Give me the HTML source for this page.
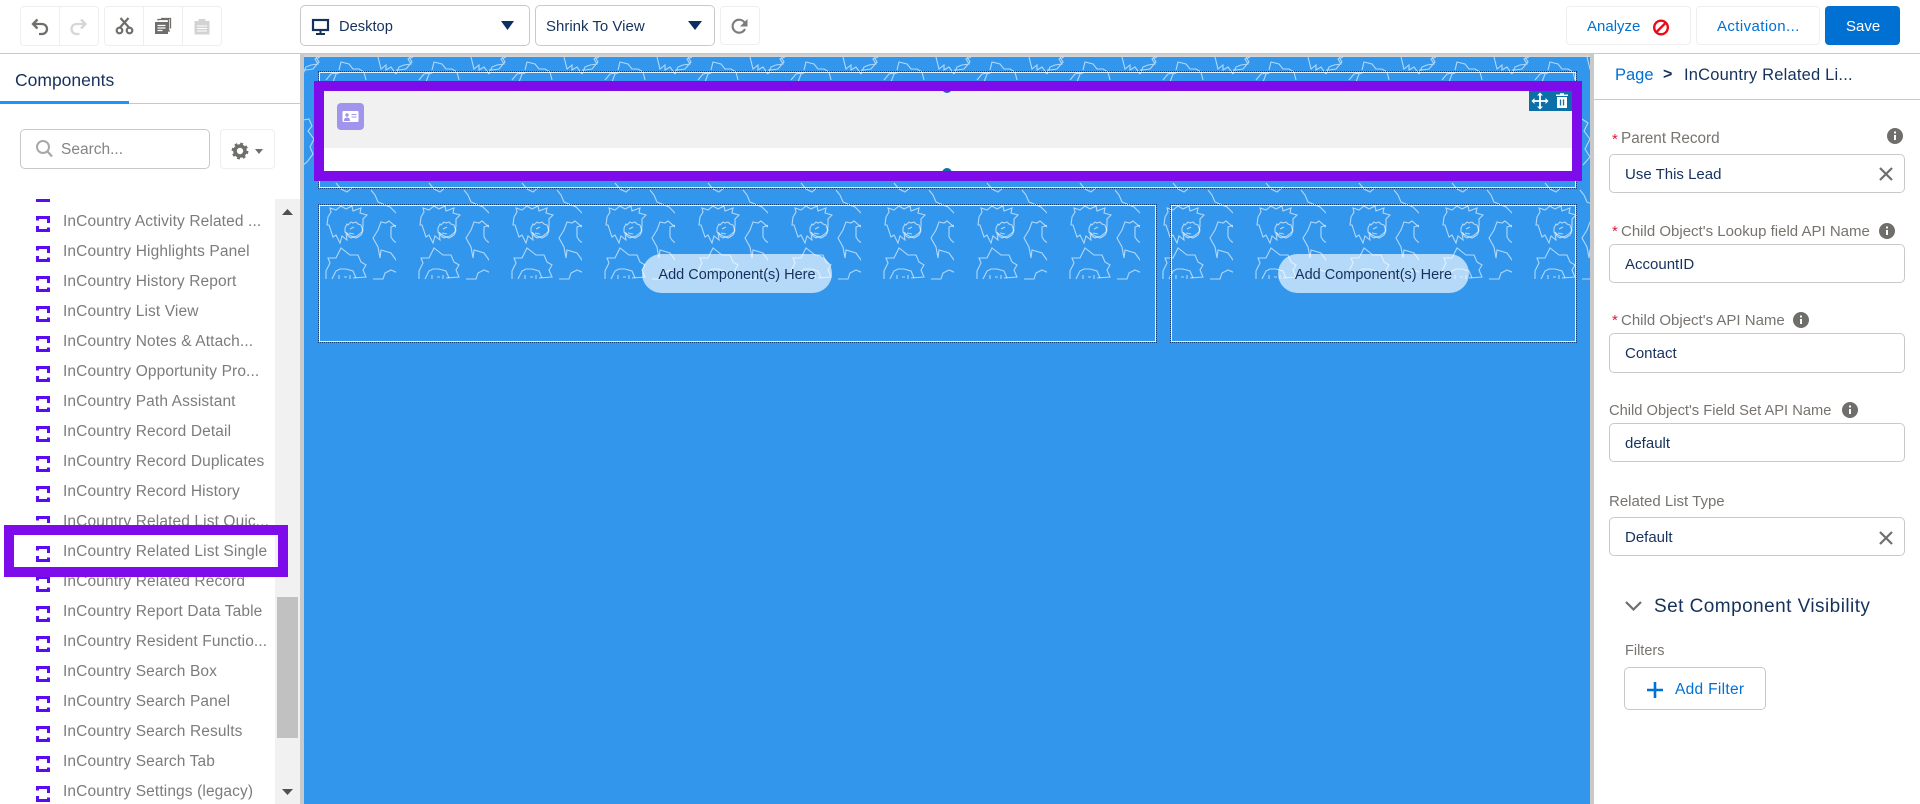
<!DOCTYPE html>
<html><head><meta charset="utf-8"><title>Builder</title>
<style>
html,body{margin:0;padding:0;width:1920px;height:804px;overflow:hidden;background:#fff;font-family:"Liberation Sans",sans-serif;color:#16325c}
.a{position:absolute}
.t{position:absolute;white-space:nowrap;line-height:20px}
.btn{position:absolute;border:1px solid #eeeeee;border-radius:4px;background:#fff;box-sizing:border-box}
.sel{position:absolute;border:1px solid #c9c9c9;border-radius:5px;background:#fff;box-sizing:border-box}
.inp{position:absolute;left:1609px;width:296px;border:1px solid #c9c9c9;border-radius:5px;box-sizing:border-box;background:#fff}
.i{position:absolute;left:63px;font-size:15.5px;letter-spacing:.12px;color:#7c7c7c;line-height:20px;white-space:nowrap}
.lab{position:absolute;font-size:15px;color:#77736f;line-height:20px;white-space:nowrap}
.val{position:absolute;left:1625px;font-size:15px;color:#16325c;line-height:20px;white-space:nowrap}
.star{position:absolute;left:1612px;color:#e0193c;font-size:15px;line-height:20px}
.box{position:absolute;border:1px dotted #123a70;box-sizing:border-box}
.box:after{content:"";position:absolute;left:0;top:0;right:0;bottom:0;border:1.5px solid rgba(255,255,255,.88)}
.pill{position:absolute;background:rgba(255,255,255,.64);border-radius:20px;text-align:center;font-size:14.5px;line-height:42px;color:#16325c;white-space:nowrap}
svg{position:absolute;overflow:visible}
</style></head><body>

<!-- header -->
<div class="a" style="left:0;top:53px;width:1920px;height:1px;background:#c9c9c9"></div>
<div class="btn" style="left:20px;top:6px;width:79px;height:40px"></div>
<div class="a" style="left:59px;top:6px;width:1px;height:40px;background:#eee"></div>
<div class="btn" style="left:104px;top:6px;width:118px;height:40px"></div>
<div class="a" style="left:143px;top:6px;width:1px;height:40px;background:#eee"></div>
<div class="a" style="left:182px;top:6px;width:1px;height:40px;background:#eee"></div>
<svg style="left:0;top:0" width="240" height="50">
<path d="M37.500 19.500L33 24 37.500 28.500M33 24H42a5 5 0 0 1 0 10H39" fill="none" stroke="#706e6b" stroke-width="2.300"/>
<path d="M81 19.500L85.500 24 81 28.500M85.500 24H76.500a5 5 0 0 0 0 10H79.500" fill="none" stroke="#d6d6d6" stroke-width="2.300"/>
<g fill="none" stroke="#706e6b" stroke-width="2.200"><path d="M120 27.500L128.500 18M129 27.500L120.500 18"/><circle cx="119.500" cy="30.500" r="2.800"/><circle cx="129.500" cy="30.500" r="2.800"/></g>
<path d="M155 22h13v12h-13z" fill="#706e6b"/><path d="M158 20.500v-1h10.500v11.500h1.500M161 18.500h9.500v10" fill="none" stroke="#706e6b" stroke-width="1.300"/><path d="M157.500 25.500h8M157.500 28h8M157.500 30.500h5" stroke="#fff" stroke-width="1.200"/>
<path d="M194.500 21h15v13.500h-15z" fill="#d3d3d3"/><rect x="198.500" y="19" width="7" height="3.500" fill="#d3d3d3"/><path d="M197 26h10M197 28.500h10M197 31h10" stroke="#fff" stroke-width="1.100"/>
</svg>

<div class="sel" style="left:300px;top:5px;width:230px;height:41px"></div>
<div class="sel" style="left:535px;top:5px;width:180px;height:41px"></div>
<div class="btn" style="left:720px;top:6px;width:40px;height:39px"></div>
<svg style="left:0;top:0" width="760" height="50">
<rect x="313" y="20" width="15" height="10" fill="none" stroke="#16325c" stroke-width="2.200"/><path d="M320.500 30v3M316 34h9" stroke="#16325c" stroke-width="2"/>
<path d="M501 21h13l-6.500 9z" fill="#0b2f63"/>
<path d="M688 21h14l-7 9z" fill="#0b2f63"/>
<path d="M744.600 22.700A6.500 6.500 0 1 0 745 29" fill="none" stroke="#7b7b7b" stroke-width="2.100"/><path d="M747.500 19v7.500h-7.500z" fill="#7b7b7b"/>
</svg>
<div class="t" style="left:339px;top:17px;font-size:14.7px">Desktop</div>
<div class="t" style="left:546px;top:17px;font-size:15px">Shrink To View</div>

<div class="btn" style="left:1566px;top:6px;width:125px;height:39px"></div>
<div class="t" style="left:1587px;top:17px;font-size:15px;color:#0070d2">Analyze</div>
<svg style="left:0;top:0" width="1700" height="50"><circle cx="1661" cy="27.500" r="6.800" fill="none" stroke="#ea0b14" stroke-width="2.400"/><path d="M1656 32.500l10-10" stroke="#ea0b14" stroke-width="2.400"/></svg>
<div class="btn" style="left:1696px;top:6px;width:124px;height:39px"></div>
<div class="t" style="left:1717px;top:17px;font-size:15px;letter-spacing:.4px;color:#0070d2">Activation...</div>
<div class="a" style="left:1825px;top:6px;width:75px;height:39px;background:#0070d2;border-radius:4px"></div>
<div class="t" style="left:1846px;top:17px;font-size:15px;color:#fff">Save</div>

<!-- left panel -->
<div class="t" style="left:15px;top:70px;font-size:17.5px;color:#16325c">Components</div>
<div class="a" style="left:0;top:103px;width:300px;height:1px;background:#c9c9c9"></div>
<div class="a" style="left:0;top:101px;width:129px;height:3px;background:#1b96ff"></div>
<div class="sel" style="left:20px;top:129px;width:190px;height:40px"></div>
<svg style="left:0;top:0" width="300" height="180"><circle cx="43" cy="147" r="6" fill="none" stroke="#a8a8a8" stroke-width="2"/><path d="M47.500 151.500l4.500 5" stroke="#a8a8a8" stroke-width="2.200"/></svg>
<div class="t" style="left:61px;top:140px;font-size:15.5px;color:#848484">Search...</div>
<div class="btn" style="left:220px;top:129px;width:55px;height:40px"></div>
<svg style="left:0;top:0" width="300" height="180">
<circle cx="240" cy="151" r="5" fill="none" stroke="#706e6b" stroke-width="3.600"/><circle cx="240" cy="151" r="7.200" fill="none" stroke="#706e6b" stroke-width="2.400" stroke-dasharray="2.800 2.850"/>
<path d="M255 149h8l-4 5z" fill="#706e6b"/></svg>

<div class="a" style="left:275px;top:199px;width:25px;height:605px;background:#f1f1f1"></div>
<div class="a" style="left:277px;top:597px;width:21px;height:141px;background:#c1c1c1"></div>
<svg style="left:0;top:0" width="300" height="804"><path d="M282 215l5.500-6 5.500 6z" fill="#505050"/><path d="M282 789h11l-5.500 6z" fill="#505050"/></svg>

<svg style="left:0;top:199px;overflow:hidden" width="60" height="605" viewBox="0 199 60 605">
<defs><g id="ic" fill="none" stroke="#5b0bf3" stroke-width="3"><path d="M36 1.500H50M48.500 0V7M37.500 0V4.500M37.500 10V16M36 14.500H50M48.500 11.500V16"/></g></defs>
<use href="#ic" x="0" y="186"/><use href="#ic" x="0" y="216"/><use href="#ic" x="0" y="246"/><use href="#ic" x="0" y="276"/><use href="#ic" x="0" y="306"/><use href="#ic" x="0" y="336"/><use href="#ic" x="0" y="366"/><use href="#ic" x="0" y="396"/><use href="#ic" x="0" y="426"/><use href="#ic" x="0" y="456"/><use href="#ic" x="0" y="486"/><use href="#ic" x="0" y="516"/><use href="#ic" x="0" y="546"/><use href="#ic" x="0" y="576"/><use href="#ic" x="0" y="606"/><use href="#ic" x="0" y="636"/><use href="#ic" x="0" y="666"/><use href="#ic" x="0" y="696"/><use href="#ic" x="0" y="726"/><use href="#ic" x="0" y="756"/><use href="#ic" x="0" y="786"/>
</svg>
<div class="i" style="top:212px">InCountry Activity Related ...</div>
<div class="i" style="top:242px">InCountry Highlights Panel</div>
<div class="i" style="top:272px">InCountry History Report</div>
<div class="i" style="top:302px">InCountry List View</div>
<div class="i" style="top:332px">InCountry Notes &amp; Attach...</div>
<div class="i" style="top:362px">InCountry Opportunity Pro...</div>
<div class="i" style="top:392px">InCountry Path Assistant</div>
<div class="i" style="top:422px">InCountry Record Detail</div>
<div class="i" style="top:452px">InCountry Record Duplicates</div>
<div class="i" style="top:482px">InCountry Record History</div>
<div class="i" style="top:512px">InCountry Related List Quic...</div>
<div class="i" style="top:572px">InCountry Related Record</div>
<div class="i" style="top:602px">InCountry Report Data Table</div>
<div class="i" style="top:632px">InCountry Resident Functio...</div>
<div class="i" style="top:662px">InCountry Search Box</div>
<div class="i" style="top:692px">InCountry Search Panel</div>
<div class="i" style="top:722px">InCountry Search Results</div>
<div class="i" style="top:752px">InCountry Search Tab</div>
<div class="i" style="top:782px">InCountry Settings (legacy)</div>
<div class="a" style="left:4px;top:525px;width:264px;height:32px;border:10px solid #7e0bea"></div>
<svg style="left:0;top:0" width="60" height="804"><use href="#ic" x="0" y="546"/></svg>
<div class="i" style="top:542px">InCountry Related List Single</div>

<!-- canvas -->
<div class="a" style="left:300px;top:53px;width:4px;height:751px;background:#c9c9c9"></div>
<div class="a" style="left:1590px;top:53px;width:4px;height:751px;background:#c9c9c9"></div>
<div class="a" style="left:304px;top:53px;width:1286px;height:4px;background:linear-gradient(#c4c4c4,#dadada)"></div>
<div class="a" style="left:304px;top:57px;width:1286px;height:747px;background:#3296ed"></div>
<svg style="left:303px;top:57px" width="1287" height="223">
<defs><pattern id="p" patternUnits="userSpaceOnUse" width="93" height="223" x="0" y="0">
<g fill="none" stroke="#fff" stroke-opacity=".62" stroke-width="1.100">
<path d="M25 160L28 155 27 151 33 153 38 149 43 152 49 149 50 154 58 151 57 156 64 158 60 162 60 169 59 175 54 179 50 180 43 176 44 183 39 179 37 186 33 178 30 180 26 168 24 168z"/>
<path d="M42 171l2-4 1 1 3-3 2 1 3-1 2 2 3 1 1 3 1 2-1 3-1 2-3 2-2 1-3-1-2 1-3-2-1-3-2-1zM47 172l4-2M46 176l5 1"/>
<path d="M70 181L75 173 78 165 83 166 86 164 93 170 100 168 106 175 105 183 110 186 106 188 110 191 100 195 98 198 93 203 88 196 78 193 77 201 75 190z"/>
<path d="M88 170l3-1 3-1 3 2 4 1 2 4 1 3-1 3-1 3-3 1-3 1-4-1-2-2-2-3 0-4 0-3zM94 170l1 6 2-3"/>
<path d="M23 222L23 214 27 206 25 201 33 201 38 191 47 198 55 198 58 205 63 208 60 213 63 220 50 221"/>
<path d="M29 222L33 214 37 212 43 212 50 214 53 221M36 218v4M41 220h3M47 218v4"/>
<path d="M70 222H80L82 216 88 213 95 216 100 221 108 222"/>
<path d="M68 133L72 138 75 145 87 150 95 158 97 151 107 146 110 136M33 126L38 132 44 135 50 130"/>
<path d="M36 13L38 5 46 7 50 12 56 12 61 15 63 23M75 0L78 12 83 8 83 13 88 10 93 17M0 13 3 13 10 12 16 5 13 0M0 17 3 10 8 8 15 7 12 2 17 0M30 25L33 17 38 15M23 23L28 17 33 16"/>
<path d="M0 63L6 62 9 69 5 74 11 82 7 90 10 97 4 105 0 108M70 62L76 66 72 74 78 82 73 92 78 100 71 108"/>
</g></pattern></defs>
<rect x="1" y="0" width="1286" height="223" fill="url(#p)"/>
</svg>
<div class="box" style="left:318px;top:71px;width:1259px;height:118px"></div>
<div class="box" style="left:318px;top:204px;width:839px;height:139px"></div>
<div class="box" style="left:1170px;top:204px;width:407px;height:139px"></div>
<div class="pill" style="left:642px;top:254px;width:190px;height:39px">Add Component(s) Here</div>
<div class="pill" style="left:1278px;top:254px;width:191px;height:39px">Add Component(s) Here</div>

<div class="a" style="left:324px;top:91px;width:1248px;height:57px;background:#f1f1f1"></div>
<div class="a" style="left:324px;top:148px;width:1248px;height:23px;background:#fff"></div>
<div class="a" style="left:942px;top:83px;width:10px;height:10px;border-radius:5px;background:#0b6fa8"></div>
<div class="a" style="left:942px;top:168px;width:10px;height:10px;border-radius:5px;background:#0b6fa8"></div>
<div class="a" style="left:314px;top:81px;width:1248px;height:80px;border:10px solid #7e0bea"></div>
<div class="a" style="left:337px;top:103px;width:27px;height:27px;border-radius:4px;background:#a094ed"></div>
<svg style="left:0;top:0" width="400" height="140"><rect x="342.500" y="111" width="16" height="11" rx="1" fill="#fff"/><circle cx="347" cy="115" r="1.700" fill="#a094ed"/><path d="M344.500 120.500c0-2 1.500-2.500 2.500-2.500s2.500.5 2.500 2.500zM351.500 114.500h5M351.500 117h5" fill="#a094ed" stroke="#a094ed" stroke-width="1"/></svg>
<div class="a" style="left:1529px;top:91px;width:43px;height:20px;background:#0b6fa8"></div>
<svg style="left:0;top:0" width="1600" height="120">
<path d="M1540 94v14M1533 101h14" stroke="#fff" stroke-width="1.800"/><path d="M1540 92.500l3 3h-6zM1540 109.500l3-3h-6zM1531.500 101l3-3v6zM1548.500 101l-3-3v6z" fill="#fff"/>
<path d="M1557 97h10v11h-10z" fill="#fff"/><path d="M1556 95.300h12M1560 94h4" stroke="#fff" stroke-width="1.500"/><path d="M1560.500 99.500v6M1563.500 99.500v6" stroke="#0b6fa8" stroke-width="1.300"/>
</svg>

<!-- right panel -->
<div class="t" style="left:1615px;top:65px;font-size:16.5px;color:#0070d2">Page</div>
<div class="t" style="left:1663px;top:65px;font-size:16px;font-weight:bold">&gt;</div>
<div class="t" style="left:1684px;top:65px;font-size:16.5px;letter-spacing:.2px">InCountry Related Li...</div>
<div class="a" style="left:1594px;top:99px;width:326px;height:1px;background:#c9c9c9"></div>

<div class="star" style="top:130px">*</div><div class="lab" style="left:1621px;top:129px;font-size:15.3px">Parent Record</div>
<div class="inp" style="top:154px;height:39px"></div><div class="val" style="top:165px">Use This Lead</div>

<div class="star" style="top:222px">*</div><div class="lab" style="left:1621px;top:222px">Child Object's Lookup field API Name</div>
<div class="inp" style="top:244px;height:39px"></div><div class="val" style="top:255px">AccountID</div>

<div class="star" style="top:311px">*</div><div class="lab" style="left:1621px;top:311px">Child Object's API Name</div>
<div class="inp" style="top:333px;height:40px"></div><div class="val" style="top:344px">Contact</div>

<div class="lab" style="left:1609px;top:401px;font-size:14.7px">Child Object's Field Set API Name</div>
<div class="inp" style="top:423px;height:39px"></div><div class="val" style="top:434px">default</div>

<div class="lab" style="left:1609px;top:492px">Related List Type</div>
<div class="inp" style="top:517px;height:39px"></div><div class="val" style="top:528px">Default</div>

<svg style="left:0;top:0" width="1920" height="720">
<g fill="#706e6b"><circle cx="1895" cy="136" r="8"/><circle cx="1887" cy="231" r="8"/><circle cx="1801" cy="320" r="8"/><circle cx="1850" cy="410" r="8"/></g>
<g stroke="#fff" stroke-width="2"><path d="M1895 135v5M1895 131.500v2M1887 230v5M1887 226.500v2M1801 319v5M1801 315.500v2M1850 409v5M1850 405.500v2"/></g>
<g stroke="#706e6b" stroke-width="2.200"><path d="M1880 168l12 12M1892 168l-12 12M1880 532l12 12M1892 532l-12 12"/></g>
<path d="M1626 602l7.500 7.500 7.500-7.500" fill="none" stroke="#706e6b" stroke-width="2.200"/>
</svg>
<div class="t" style="left:1654px;top:597px;font-size:19px;letter-spacing:.45px">Set Component Visibility</div>
<div class="lab" style="left:1625px;top:641px;font-size:14.5px">Filters</div>
<div class="sel" style="left:1624px;top:667px;width:142px;height:43px"></div>
<svg style="left:0;top:0" width="1920" height="720"><path d="M1655 682v16M1647 690h16" stroke="#0070d2" stroke-width="2.600"/></svg>
<div class="t" style="left:1675px;top:680px;font-size:15.5px;letter-spacing:.3px;color:#0070d2">Add Filter</div>
</body></html>
